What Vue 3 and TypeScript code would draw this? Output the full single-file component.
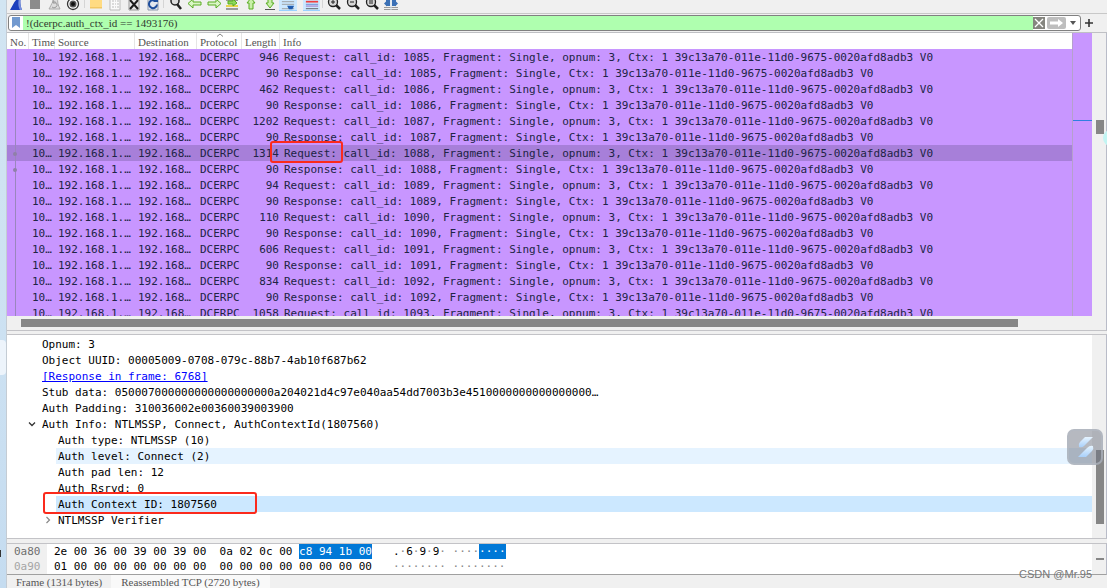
<script setup lang="ts">
import { ref } from 'vue'

interface Packet {
  len: number
  kind: 'Request' | 'Response'
  call: number
  selected?: boolean
}

interface Detail {
  text: string
  level: 1 | 2
  link?: boolean
  expander?: 'open' | 'closed'
  state?: 'hover' | 'selected'
}

const filter = ref('!(dcerpc.auth_ctx_id == 1493176)')
const uuid = '39c13a70-011e-11d0-9675-0020afd8adb3'

const requestLengths = [946, 462, 1202, 1314, 94, 110, 606, 834, 1058]
const packets: Packet[] = requestLengths
  .flatMap((len, i): Packet[] => [
    { len, kind: 'Request', call: 1085 + i, selected: i === 3 },
    { len: 90, kind: 'Response', call: 1085 + i },
  ])
  .slice(0, 17)

function info(p: Packet): string {
  const op = p.kind === 'Request' ? ' opnum: 3,' : ''
  return ` call_id: ${p.call}, Fragment: Single,${op} Ctx: 1 ${uuid} V0`
}

const details: Detail[] = [
  { text: 'Opnum: 3', level: 1 },
  { text: 'Object UUID: 00005009-0708-079c-88b7-4ab10f687b62', level: 1 },
  { text: '[Response in frame: 6768]', level: 1, link: true },
  { text: 'Stub data: 050007000000000000000000a204021d4c97e040aa54dd7003b3e4510000000000000000…', level: 1 },
  { text: 'Auth Padding: 310036002e00360039003900', level: 1 },
  { text: 'Auth Info: NTLMSSP, Connect, AuthContextId(1807560)', level: 1, expander: 'open' },
  { text: 'Auth type: NTLMSSP (10)', level: 2 },
  { text: 'Auth level: Connect (2)', level: 2, state: 'hover' },
  { text: 'Auth pad len: 12', level: 2 },
  { text: 'Auth Rsrvd: 0', level: 2 },
  { text: 'Auth Context ID: 1807560', level: 2, state: 'selected' },
  { text: 'NTLMSSP Verifier', level: 2, expander: 'closed' },
]

const hexRows = [
  { offset: '0a80', plain: '2e 00 36 00 39 00 39 00  0a 02 0c 00 ', marked: 'c8 94 1b 00' },
  { offset: '0a90', plain: '01 00 00 00 00 00 00 00  00 00 00 00 00 00 00 00', marked: '' },
]
</script>

<template>
  <div class="screen">
    <aside class="desktop"><span class="peek"></span><span class="tick"></span></aside>
    <main class="app">
      <nav class="toolbar" aria-label="Main toolbar">
        <div class="group four">
          <button aria-label="Start capture"><svg viewBox="0 0 16 16"><path d="M2 15C5 10 7 4 13 1c-1 5-1 9 1 14z" fill="#1d3fbd" /><path d="M11 3c-1 5-1 8 1 12h2C12 10 12 6 13 1z" fill="#7990dc" /></svg></button>
          <button aria-label="Stop capture"><svg viewBox="0 0 16 16"><path d="M3 3h10v11H3z" fill="#8b8b8b" /></svg></button>
          <button aria-label="Restart capture"><svg viewBox="0 0 16 16"><path d="M3 14C6 9 7 4 12 2c-1 5 0 8 2 12z" fill="#ddd" stroke="#aaa" /><path d="M6 12a3 3 0 1 0 1-5M7 5v3h3" fill="none" stroke="#999" /></svg></button>
          <button aria-label="Capture options"><svg viewBox="0 0 16 16"><circle cx="8" cy="9" r="5.500" fill="#fff" stroke="#333" stroke-width="1.300" /><circle cx="8" cy="9" r="3.500" fill="#555" /><circle cx="8" cy="9" r="2" fill="#111" /></svg></button>
        </div>
        <i class="sep"></i>
        <div class="group four">
          <button aria-label="Open file"><svg viewBox="0 0 16 16"><path d="M2 2h12v11H2z" fill="#ffdb82" /><path d="M2 12h12v1.500H2z" fill="#f2c763" /></svg></button>
          <button aria-label="Save file"><svg viewBox="0 0 16 16"><path d="M3 1h10v14H3z" fill="#fafafa" stroke="#bbb" /><path d="M5 6h2m1 0h1m1 0h2M5 9h2m1 0h1m1 0h2M5 12h2m1 0h1m1 0h2" stroke="#bbb" /></svg></button>
          <button aria-label="Close file"><svg viewBox="0 0 16 16"><path d="M3 1h10v14H3z" fill="#e6e6e6" stroke="#999" /><path d="M4 5l8 9M12 5l-8 9" stroke="#1c1c1c" stroke-width="2" /></svg></button>
          <button aria-label="Reload file"><svg viewBox="0 0 16 16"><path d="M3 1h10v14H3z" fill="#e2e7ee" stroke="#8d99ac" /><path d="M10.500 6A4 4 0 1 0 12 9.500" fill="none" stroke="#1f4e9c" stroke-width="2" /><path d="M8 7h5V3z" fill="#1f4e9c" /></svg></button>
        </div>
        <i class="sep wide"></i>
        <div class="group six">
          <button aria-label="Find packet"><svg viewBox="0 0 16 16"><circle cx="7" cy="6" r="4" fill="#ddd" stroke="#222" stroke-width="1.500" /><path d="M9 9l4 5" stroke="#222" stroke-width="2.500" /></svg></button>
          <button aria-label="Previous packet"><svg viewBox="0 0 16 16"><path d="M1 8.500L6 4v3h8v3H6v3z" fill="#d9f5c5" stroke="#58ad20" /></svg></button>
          <button aria-label="Next packet"><svg viewBox="0 0 16 16"><path d="M15 8.500L10 4v3H2v3h8v3z" fill="#d9f5c5" stroke="#58ad20" /></svg></button>
          <button aria-label="Go to packet"><svg viewBox="0 0 16 16"><path d="M2 5h12M2 14h12" stroke="#444" /><path d="M2 11h12" stroke="#e7d44b" stroke-width="2" /><path d="M13 8L9 4v2H4v3h5v2z" fill="#8dd65b" stroke="#58ad20" /></svg></button>
          <button aria-label="First packet"><svg viewBox="0 0 16 16"><path d="M8 3l4 5h-2v6H6V8H4z" fill="#c8efa9" stroke="#58ad20" /><path d="M3 2h10" stroke="#555" /></svg></button>
          <button aria-label="Last packet"><svg viewBox="0 0 16 16"><path d="M8 13L4 8h2V2h4v6h2z" fill="#c8efa9" stroke="#58ad20" /><path d="M3 14.500h10" stroke="#555" /></svg></button>
        </div>
        <div class="group toggles">
          <button class="on" aria-label="Auto scroll"><svg viewBox="0 0 16 16"><path d="M1 6.500h14M1 9.500h14M1 14.500h14" stroke="#999" /><path d="M7 11h8l-2 4H9z" fill="#205cae" /></svg></button>
          <button class="on" aria-label="Colorize"><svg viewBox="0 0 16 16"><path d="M1 6.500h14" stroke="#ef4040" stroke-width="2" /><path d="M1 9.500h14" stroke="#6687d5" /><path d="M1 11.500h14" stroke="#9862bd" /><path d="M1 14.500h14" stroke="#555" /></svg></button>
        </div>
        <i class="sep"></i>
        <div class="group four">
          <button v-for="z in ['Zoom in', 'Zoom out', 'Normal size']" :key="z" :aria-label="z"><svg viewBox="0 0 16 16"><circle cx="7" cy="7" r="4.500" fill="#d8d8d8" stroke="#222" stroke-width="1.300" /><path d="M10 10l4 4" stroke="#222" stroke-width="2.500" /><path :d="z === 'Zoom in' ? 'M5 7h4M7 5v4' : z === 'Zoom out' ? 'M5 7h4' : 'M5 6h4M5 8h4'" stroke="#222" /></svg></button>
          <button aria-label="Resize columns"><svg viewBox="0 0 16 16"><path d="M3 3h4v8H3zM9 3h4v8H9z" fill="#3b70b5" /><path d="M1 8.500l3-3v6zM15 8.500l-3-3v6z" fill="#3b70b5" /><path d="M1 12.500h14M1 14.500h14" stroke="#999" /><path d="M8 2v13" stroke="#d7e5f2" /></svg></button>
        </div>
      </nav>

      <form class="filterbar" @submit.prevent>
        <div class="field">
          <button type="button" class="bookmark" aria-label="Bookmarks"><svg viewBox="0 0 8 11"><path d="M0 0h8v11L4 8l-4 3z" fill="#7299cf" /></svg></button>
          <input v-model="filter" aria-label="Display filter" spellcheck="false" />
          <button type="button" class="clear" aria-label="Clear filter"><svg viewBox="0 0 12 12"><path d="M2 2l8 8M10 2l-8 8" stroke="#fff" stroke-width="1.300" /></svg></button>
          <button class="apply" aria-label="Apply filter"><svg viewBox="0 0 19 12"><path d="M3 4.500h8V2l5 4-5 4V7.500H3z" fill="#fff" /></svg></button>
          <button type="button" class="drop" aria-label="Recent filters"><svg viewBox="0 0 6 4"><path d="M0 0h6L3 4z" fill="#555" /></svg></button>
        </div>
        <button type="button" class="plus" aria-label="Add filter button"><svg viewBox="0 0 8 8"><path d="M4 0v8M0 4h8" stroke="#333" stroke-width="1.600" /></svg></button>
      </form>

      <section class="pane packets">
        <div class="listing">
          <div class="rows">
            <table>
              <colgroup><col class="c-no" /><col class="c-time" /><col class="c-src" /><col class="c-dst" /><col class="c-proto" /><col class="c-len" /><col /></colgroup>
              <thead>
                <tr><th>No.</th><th>Time</th><th>Source</th><th>Destination</th><th class="sorted">Protocol<svg viewBox="0 0 8 4"><path d="M1 3.500L4 1l3 2.500" fill="none" stroke="#888" /></svg></th><th>Length</th><th>Info</th></tr>
              </thead>
              <tbody>
                <tr v-for="(p, i) in packets" :key="i" :class="{ selected: p.selected }">
                  <td class="rel"><i v-if="i === 6 || i === 7" class="dot"></i></td>
                  <td>10…</td>
                  <td>192.168.1.…</td>
                  <td>192.168…</td>
                  <td>DCERPC</td>
                  <td class="num">{{ p.len }}</td>
                  <td class="info">{{ p.kind }}:{{ info(p) }}<i v-if="p.selected" class="mark"></i></td>
                </tr>
              </tbody>
            </table>
          </div>
          <div class="minimap"><i></i></div>
          <div class="vscroll"><i class="thumb list-thumb"></i></div>
        </div>
        <div class="hscroll"><i></i></div>
      </section>

      <section class="pane details">
        <ul>
          <li v-for="d in details" :key="d.text" :class="['level' + d.level, d.state]">
            <button v-if="d.expander" class="expander" :aria-label="d.expander === 'open' ? 'Collapse' : 'Expand'">
              <svg viewBox="0 0 8 8"><path v-if="d.expander === 'open'" d="M1 2.500l3 3 3-3" fill="none" stroke="#333" stroke-width="1.300" /><path v-else d="M2.500 1l3 3-3 3" fill="none" stroke="#888" stroke-width="1.200" /></svg>
            </button>
            <a v-if="d.link" href="#frame-6768">{{ d.text }}</a>
            <span v-else>{{ d.text }}</span>
            <i v-if="d.state === 'selected'" class="mark"></i>
          </li>
        </ul>
        <div class="vscroll"><i class="thumb detail-thumb"></i></div>
      </section>

      <section class="pane bytes">
        <div class="dump">
          <div v-for="(row, i) in hexRows" :key="row.offset" class="line">
            <span class="offset" :class="{ dim: i === 1 }">{{ row.offset }}</span>
            <span class="hex">{{ row.plain }}<b v-if="row.marked">{{ row.marked }}</b></span>
            <span v-if="i === 0" class="ascii">.<s>·</s>6<s>·</s>9<s>·</s>9<s>·</s> <s>····</s><b>····</b></span>
            <span v-else class="ascii"><s>········ ········</s></span>
          </div>
        </div>
        <div class="vscroll"><i class="thumb byte-thumb"></i></div>
      </section>

      <footer class="tabs">
        <button>Frame (1314 bytes)</button>
        <button class="active">Reassembled TCP (2720 bytes)</button>
      </footer>
    </main>

    <i class="bubble"></i>
    <button class="floating" aria-label="Assistant"><svg viewBox="0 0 32 32"><defs><linearGradient id="wing" x1="0" y1="0" x2="0" y2="1"><stop offset="0" stop-color="#e6f4ff" /><stop offset="1" stop-color="#a9d0fa" /></linearGradient></defs><path d="M16 6h8l-9 9q-2 2-5 1-1-3 1-5z" fill="url(#wing)" /><path d="M17 26H9l9-9q3-3 6-2 1 3-1 5z" fill="url(#wing)" /></svg></button>
    <span class="watermark">CSDN @Mr.95</span>
  </div>
</template>

<style>
body { margin: 0; }
</style>

<style scoped>
* { box-sizing: border-box; }
.screen {
  position: relative;
  display: flex;
  height: 100vh;
  overflow: hidden;
  background: #f0f0f0;
  color: #000;
  font-family: "DejaVu Sans Mono", "Liberation Mono", monospace;
  font-size: 11px;
  line-height: 16px;
}
button { padding: 0; border: 0; background: none; color: inherit; font: inherit; }
svg { display: block; flex: none; }
.desktop { position: relative; width: 7px; flex: none; background: linear-gradient(#d2e5f2, #cce1f2 60%, #c5dcf0); border-right: 1px solid #c4ccd4; }
.peek { position: absolute; left: 0; top: 340px; width: 6px; height: 35px; border-radius: 0 4px 4px 0; background: #edf4fb; }
.tick { position: absolute; left: 0; top: 550px; width: 1px; height: 7px; background: #333; }
.app {
  display: grid;
  flex: 1;
  min-width: 0;
  grid-template-columns: minmax(0, 1fr);
  grid-template-rows: 14px 19px minmax(0, 298fr) 3px minmax(0, 205fr) 4px auto 13px;
}
.toolbar { grid-row: 1; display: flex; overflow: hidden; border-bottom: 1px solid #c8c8c8; }
.group { display: grid; height: 11px; align-self: start; }
.group button { display: flex; align-items: flex-end; justify-content: center; height: 11px; }
.group svg { width: 16px; height: 16px; }
.four { width: 75px; grid-template-columns: repeat(4, 1fr); }
.six { width: 112px; grid-template-columns: repeat(6, 1fr); }
.toggles { width: 41px; grid-template-columns: 18px 17px; column-gap: 6px; }
.toggles .on { background: #cce8ff; border-bottom: 1px solid #99d1ff; }
.toggles svg { width: 14px; height: 14px; }
.sep { width: 1px; margin: 0 2px; height: 8px; background: #d5d5d5; }
.sep.wide { margin: 0 3px 0 1px; }
.filterbar { grid-row: 2; display: flex; align-items: center; padding: 0 14px 1px 1px; border-bottom: 1px solid #bfc0c4; }
.field { display: flex; flex: 1; align-items: center; height: 16px; overflow: hidden; border: 1px solid #808080; border-radius: 3px; background: #fff; }
.bookmark { display: flex; justify-content: center; width: 14px; }
.bookmark svg { width: 8px; height: 11px; }
.field input { flex: 1; min-width: 0; height: 14px; padding: 0 3px; border: 0; outline: 0; background: #afffaf; color: #303a30; font: 11px/14px "Liberation Serif", serif; }
.clear { width: 12px; height: 12px; background: #85857f; }
.clear svg { width: 12px; height: 12px; }
.apply { width: 19px; height: 12px; margin-left: 2px; border-radius: 2px; background: #bebebe; }
.apply svg { width: 19px; height: 12px; }
.drop { display: flex; justify-content: center; width: 14px; }
.drop svg { width: 6px; height: 4px; }
.plus { margin-left: 4px; }
.plus svg { width: 8px; height: 8px; }

.pane { min-height: 0; border-right: 1px solid #b9bcc8; border-bottom: 1px solid #c3c3c7; }
.packets { grid-row: 3; display: flex; flex-direction: column; }
.listing { display: flex; flex: 1; min-height: 0; }
.rows { position: relative; flex: 1; min-width: 0; overflow: hidden; background: #c896ff; }
.rows::after { content: ""; position: absolute; left: 8px; top: 16px; bottom: 0; width: 1px; background: #9a86bd; }
table { width: 100%; table-layout: fixed; border-collapse: collapse; color: #202445; }
.c-no { width: 22px; }
.c-time { width: 26px; }
.c-src { width: 80px; }
.c-dst { width: 62px; }
.c-proto { width: 45px; }
.c-len { width: 38px; }
th, td { height: 16px; padding: 2px 0 0 3px; text-align: left; white-space: pre; line-height: 14px; }
th { background: #fff; color: #555; font-family: "Liberation Serif", serif; font-size: 11px; font-weight: normal; box-shadow: inset -1px 0 #e5e5e5; }
th:last-child { box-shadow: none; }
.sorted { position: relative; }
.sorted svg { position: absolute; left: 19px; top: 0; width: 8px; height: 4px; }
tr.selected { background: #a77fd9; }
td.num { padding: 2px 1px 0 0; text-align: right; }
td.info { position: relative; padding-left: 4px; }
.rel { position: relative; }
.dot { position: absolute; z-index: 1; left: 6px; top: 7px; width: 4px; height: 4px; border-radius: 50%; background: #8f80a8; }
.mark { position: absolute; border: 2px solid #fb2a1c; border-radius: 3px; }
.info .mark { z-index: 1; left: -10px; top: -4px; width: 73px; height: 22px; }
.minimap { width: 20px; border-left: 1px solid #b5a0cd; background: #c896ff; }
.minimap i { display: block; height: 1px; margin-top: 87px; background: #2f7fe0; }
.vscroll { width: 14px; flex: none; padding-left: 4px; background: #f0f0f0; }
.thumb { display: block; width: 8px; background: #868686; }
.list-thumb { height: 14px; margin-top: 87px; }
.hscroll { height: 14px; padding: 3px 88px 3px 14px; }
.hscroll i { display: block; height: 8px; background: #868686; }

.details { grid-row: 5; display: flex; border-top: 1px solid #c3c3c7; background: #fff; }
ul { flex: 1; min-width: 0; margin: 0; padding: 1px 0 0; list-style: none; overflow: hidden; }
li { position: relative; height: 16px; padding: 2px 0 0 2px; line-height: 14px; white-space: pre; }
.level1 { margin-left: 33px; }
.level2 { margin-left: 49px; }
.hover { background: #e5f3ff; }
.selected:not(tr) { background: #cce8ff; }
li .mark { left: -13px; top: -4px; width: 214px; height: 22px; }
a { color: #0000ff; text-decoration: underline; }
.expander { position: absolute; left: -12px; top: 4px; width: 8px; height: 8px; }
.expander svg { width: 8px; height: 8px; }
.detail-thumb { height: 74px; margin-top: 115px; }

.bytes { grid-row: 7; display: flex; border-top: 1px solid #c3c3c7; border-bottom-color: #a0a0a0; background: #fff; }
.dump { flex: 1; min-width: 0; overflow: hidden; }
.line { display: flex; height: 15px; line-height: 15px; white-space: pre; }
.offset { width: 40px; padding-left: 7px; margin-right: 7px; background: #f0f0f0; color: #6e6e6e; }
.dim { color: #a5a5a5; }
.ascii { margin-left: 21px; }
s { color: #888; text-decoration: none; }
b { display: inline-block; background: #0078d7; color: #fff; font-weight: normal; }
.byte-thumb { height: 2px; margin-top: 14px; }
.tabs { grid-row: 8; display: flex; overflow: hidden; color: #555; font: 11px/14px "Liberation Serif", serif; }
.tabs button { height: 14px; padding: 0 9px; }
.tabs .active { padding: 0 10px; background: #f9f9f9; }

.bubble { position: absolute; right: -12px; top: 130px; width: 16px; height: 16px; border-radius: 50%; background: #c3f5f3; }
.floating { position: absolute; right: 4px; top: 429px; width: 36px; height: 36px; border: 2px solid rgba(180, 185, 195, 0.7); border-radius: 7px; background: rgba(110, 115, 130, 0.5); }
.floating svg { width: 32px; height: 32px; }
.watermark { position: absolute; right: 15px; bottom: 6px; color: #777; font: 11px/16px "Liberation Sans", sans-serif; }
</style>
